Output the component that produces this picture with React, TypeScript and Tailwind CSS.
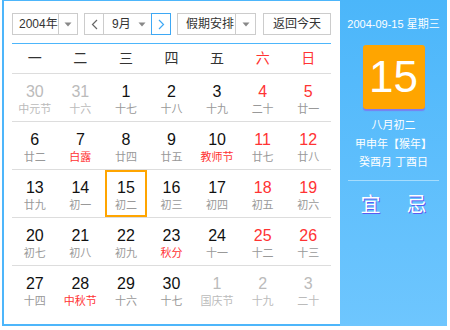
type Day = { d: number; l: string; faded?: boolean; fest?: boolean; sel?: boolean }

const weeks: Day[][] = [
  [
    { d: 30, l: "中元节", faded: true },
    { d: 31, l: "十六", faded: true },
    { d: 1, l: "十七" },
    { d: 2, l: "十八" },
    { d: 3, l: "十九" },
    { d: 4, l: "二十" },
    { d: 5, l: "廿一" },
  ],
  [
    { d: 6, l: "廿二" },
    { d: 7, l: "白露", fest: true },
    { d: 8, l: "廿四" },
    { d: 9, l: "廿五" },
    { d: 10, l: "教师节", fest: true },
    { d: 11, l: "廿七" },
    { d: 12, l: "廿八" },
  ],
  [
    { d: 13, l: "廿九" },
    { d: 14, l: "初一" },
    { d: 15, l: "初二", sel: true },
    { d: 16, l: "初三" },
    { d: 17, l: "初四" },
    { d: 18, l: "初五" },
    { d: 19, l: "初六" },
  ],
  [
    { d: 20, l: "初七" },
    { d: 21, l: "初八" },
    { d: 22, l: "初九" },
    { d: 23, l: "秋分", fest: true },
    { d: 24, l: "十一" },
    { d: 25, l: "十二" },
    { d: 26, l: "十三" },
  ],
  [
    { d: 27, l: "十四" },
    { d: 28, l: "中秋节", fest: true },
    { d: 29, l: "十六" },
    { d: 30, l: "十七" },
    { d: 1, l: "国庆节", faded: true },
    { d: 2, l: "十九", faded: true },
    { d: 3, l: "二十", faded: true },
  ],
]

const weekdays = ["一", "二", "三", "四", "五", "六", "日"]

function Caret() {
  return (
    <svg width="8" height="5" viewBox="0 0 8 5">
      <path d="M0.5 0.5h7L4 4.5z" fill="#888" />
    </svg>
  )
}

function Chevron({ dir, color }: { dir: "left" | "right"; color: string }) {
  return (
    <svg width="7" height="11" viewBox="0 0 7 11">
      <polyline
        points={dir === "left" ? "6,1 1.5,5.5 6,10" : "1,1 5.5,5.5 1,10"}
        fill="none"
        stroke={color}
        strokeWidth="1.2"
      />
    </svg>
  )
}

export default function App() {
  return (
    <div
      className="w-[450px] h-[330px] bg-white"
      style={{ fontFamily: '"Liberation Sans", "Noto Sans CJK SC", sans-serif' }}
    >
      <div className="flex ml-[2px] w-[445px] h-[326px]">
        {/* Calendar */}
        <div className="flex flex-col pt-[12px] pl-[8px] pr-[9px] border-[#4db6fb] border-t border-b-2 border-l-2 w-[338px]">
          <div className="flex items-center h-[22px] text-[#333] text-[12px] whitespace-nowrap">
            <div className="flex border border-[#ccc] w-[66px] h-full">
              <div className="flex items-center pl-[6px] border-[#ccc] border-r w-[46px]">2004年</div>
              <div className="flex flex-1 justify-center items-center">
                <Caret />
              </div>
            </div>
            <div className="flex ml-[6px] border border-[#ccc] w-[87px] h-full">
              <div className="flex justify-center items-center border-[#ccc] border-r w-[19px]">
                <Chevron dir="left" color="#666" />
              </div>
              <div className="flex flex-1 justify-between items-center pr-[5px] pl-[8px]">
                <span>9月</span>
                <Caret />
              </div>
              <div className="flex justify-center items-center -my-px -mr-px border border-[#3ea8f4] w-[20px]">
                <Chevron dir="right" color="#3ea8f4" />
              </div>
            </div>
            <div className="flex ml-[6px] border border-[#ccc] w-[79px] h-full">
              <div className="flex items-center pl-[8px] border-[#ccc] border-r w-[58px]">假期安排</div>
              <div className="flex flex-1 justify-center items-center">
                <Caret />
              </div>
            </div>
            <div className="flex justify-center items-center ml-[7px] border border-[#ccc] w-[68px] h-full">
              返回今天
            </div>
          </div>

          <div className="bg-[#4db6fb] mt-[8px] h-px" />

          <div className="grid grid-cols-7 border-[#ddd] border-b h-[30px] text-[14px]">
            {weekdays.map((w, i) => (
              <div key={w} className={`flex items-center justify-center ${i > 4 ? "text-[#ff3333]" : "text-[#333]"}`}>
                {w}
              </div>
            ))}
          </div>

          {weeks.map((week, wi) => (
            <div
              key={wi}
              className={`grid grid-cols-7 h-[48px] ${wi < weeks.length - 1 ? "border-b border-[#ddd]" : ""}`}
            >
              {week.map((day, di) => {
                const weekend = di > 4
                const numColor = day.faded ? "text-[#bbb]" : weekend ? "text-[#ff3333]" : "text-[#111]"
                const lunarColor = day.faded ? "text-[#bbb]" : day.fest ? "text-[#ff3333]" : "text-[#999]"
                return (
                  <div key={di} className="px-[1.5px]">
                    <div
                      className={`flex flex-col items-center h-full pt-[6px] border-2 ${
                        day.sel ? "border-[#ffa500]" : "border-transparent"
                      }`}
                    >
                      <div className={`text-[16px] leading-[20px] ${numColor}`}>{day.d}</div>
                      <div className={`text-[11px] leading-[14px] ${lunarColor}`}>{day.l}</div>
                    </div>
                  </div>
                )
              })}
            </div>
          ))}
        </div>

        {/* Side panel */}
        <div className="flex flex-col items-center bg-gradient-to-b from-[#4bb6fa] to-[#6ec6fe] pt-[17px] w-[107px] text-white">
          <div className="text-[11px] leading-[14px] whitespace-nowrap">2004-09-15 星期三</div>
          <div className="flex justify-center items-center bg-[#ffa500] shadow-[0_2px_1px_#7b7ef0] mt-[14px] rounded-[3px] w-[62px] h-[64px] text-[44px]">
            15
          </div>
          <div className="mt-[7px] text-[11px] leading-[18.5px] text-center">
            <div>八月初二</div>
            <div>甲申年【猴年】</div>
            <div>癸酉月 丁酉日</div>
          </div>
          <div className="bg-[#a5dcfd] mt-[8px] w-[91px] h-px" />
          <div className="flex justify-between mt-[12px] w-[66px] text-[20px] leading-[24px] [text-shadow:1px_1px_0_#5b5bf0]">
            <span>宜</span>
            <span>忌</span>
          </div>
        </div>
      </div>
    </div>
  )
}
